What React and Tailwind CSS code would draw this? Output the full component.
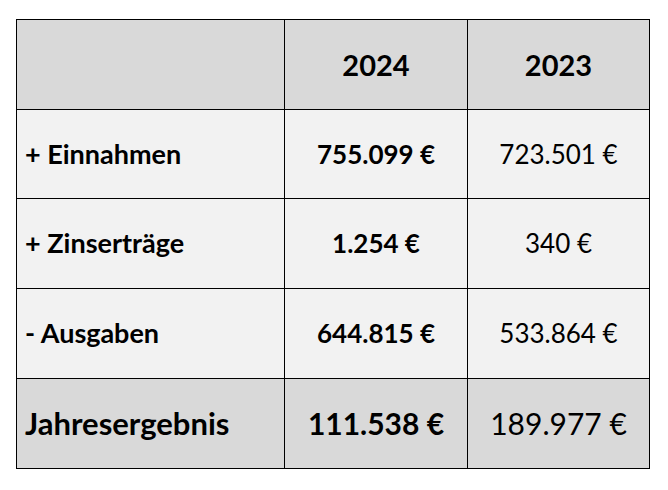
import React from 'react';

const rows = [
  { label: '+ Einnahmen', current: '755.099 €', previous: '723.501 €', height: 'h-[89px]' },
  { label: '+ Zinserträge', current: '1.254 €', previous: '340 €', height: 'h-[90px]' },
  { label: '- Ausgaben', current: '644.815 €', previous: '533.864 €', height: 'h-[90px]' },
];

function App() {
  return (
    <div className="min-h-screen bg-white pl-[16px] pt-[19px] text-black" style={{ fontFamily: 'Lato, "Open Sans", sans-serif' }}>
      <table className="border-collapse table-fixed w-[633px]">
        <colgroup>
          <col className="w-[268px]" />
          <col className="w-[183px]" />
          <col className="w-[182px]" />
        </colgroup>
        <thead>
          <tr className="h-[90px] bg-[#d9d9d9]">
            <th className="border border-black"></th>
            <th className="border border-black text-center text-[29px] font-bold">2024</th>
            <th className="border border-black text-center text-[29px] font-bold">2023</th>
          </tr>
        </thead>
        <tbody>
          {rows.map(row => (
            <tr key={row.label} className={`${row.height} bg-[#f2f2f2]`}>
              <td className="border border-black pl-[8px] text-[27px] font-bold">{row.label}</td>
              <td className="border border-black text-center text-[26px] font-bold">{row.current}</td>
              <td className="border border-black text-center text-[26px]">{row.previous}</td>
            </tr>
          ))}
          {/* Ergebniszeile */}
          <tr className="h-[90px] bg-[#d9d9d9]">
            <td className="border border-black pl-[8px] text-[31px] font-bold">Jahresergebnis</td>
            <td className="border border-black text-center text-[30px] font-bold">111.538 €</td>
            <td className="border border-black text-center text-[30px]">189.977 €</td>
          </tr>
        </tbody>
      </table>
    </div>
  );
}

export default App;
